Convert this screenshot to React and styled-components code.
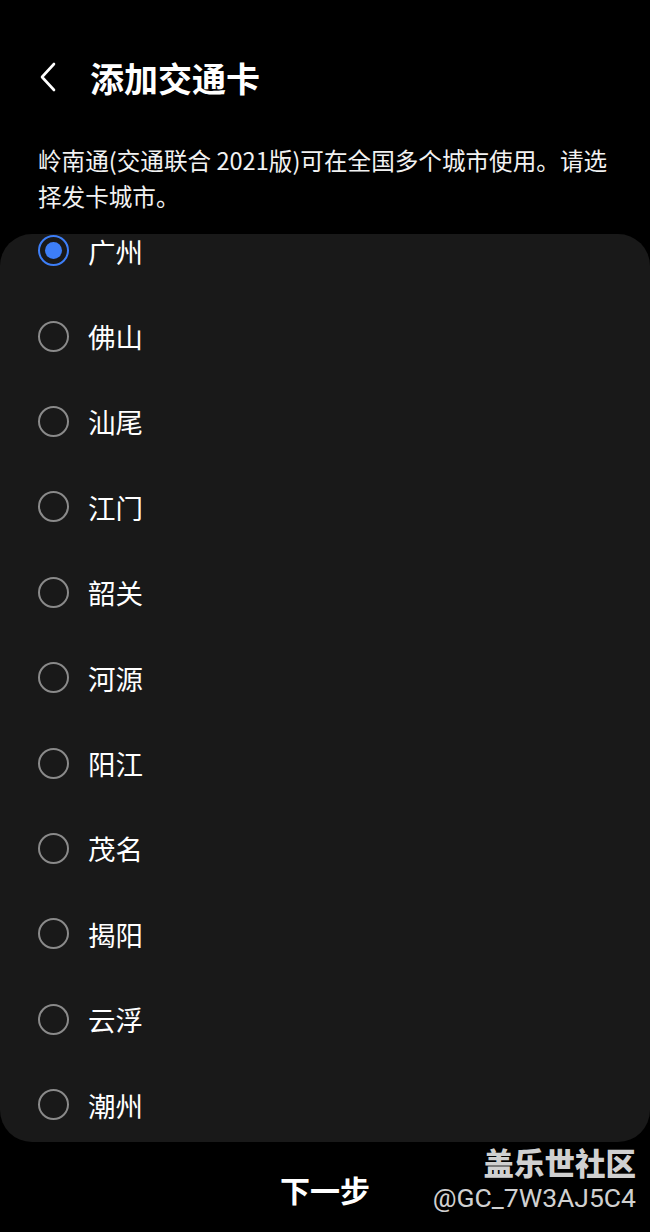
import styled, { createGlobalStyle } from "styled-components";

const GlobalStyle = createGlobalStyle`
  html, body {
    margin: 0;
    padding: 0;
    background: #000;
  }
  body {
    font-family: "Noto Sans CJK SC", "Noto Sans", sans-serif;
    color: #fff;
  }
`;

const cities = [
  "广州",
  "佛山",
  "汕尾",
  "江门",
  "韶关",
  "河源",
  "阳江",
  "茂名",
  "揭阳",
  "云浮",
  "潮州",
];

const Page = styled.div`
  position: relative;
  width: 650px;
  height: 1232px;
  background: #000;
  display: flex;
  flex-direction: column;
  overflow: hidden;
`;

const Header = styled.div`
  display: flex;
  align-items: center;
  padding-left: 38px;
  gap: 30px;
  height: 74px;
  margin-top: 40px;
`;

const Title = styled.h1`
  margin: 0;
  font-size: 34px;
  font-weight: 700;
  color: #fff;
`;

const BackBtn = styled.div`
  width: 22px;
  height: 30px;
  display: flex;
  align-items: center;
`;

const Desc = styled.p`
  margin: 28px 38px 0 38px;
  font-size: 23.6px;
  line-height: 36px;
  color: #f2f2f2;
`;

const Card = styled.div`
  margin-top: 20px;
  height: 908px;
  background: #191919;
  border-radius: 32px;
  overflow: hidden;
`;

const List = styled.div`
  margin-top: -26px;
  display: flex;
  flex-direction: column;
`;

const Row = styled.div`
  height: 85.4px;
  display: flex;
  align-items: center;
  padding-left: 38px;
  gap: 19px;
`;

const Radio = styled.div`
  width: 27px;
  height: 27px;
  border-radius: 50%;
  border: 2.5px solid ${(p) => (p.checked ? "#3d7ef7" : "#8a8a8a")};
  display: flex;
  align-items: center;
  justify-content: center;
  flex-shrink: 0;
  &::after {
    content: "";
    display: ${(p) => (p.checked ? "block" : "none")};
    width: 17px;
    height: 17px;
    border-radius: 50%;
    background: #3d7ef7;
  }
`;

const CityName = styled.span`
  font-size: 27.5px;
  color: #fff;
`;

const Footer = styled.div`
  flex: 1;
  display: flex;
  align-items: center;
  justify-content: center;
`;

const NextBtn = styled.span`
  font-size: 30px;
  font-weight: 700;
  color: #fff;
  margin-top: 4px;
`;

const Watermark = styled.div`
  position: absolute;
  right: 14px;
  bottom: 18px;
  display: flex;
  flex-direction: column;
  align-items: flex-end;
  color: #d0d0d0;
  line-height: 1.2;
`;

const MarkTitle = styled.span`
  font-size: 30.5px;
  font-weight: 900;
  margin-bottom: 2px;
`;

const MarkId = styled.span`
  font-family: "Roboto", "Liberation Sans", sans-serif;
  font-size: 26.5px;
`;

export default function App() {
  return (
    <>
      <GlobalStyle />
      <Page>
        <Header>
          <BackBtn>
            <svg width="22" height="30" viewBox="0 0 22 30">
              <path
                d="M16 2 L4 15 L16 28"
                fill="none"
                stroke="#fff"
                strokeWidth="2.6"
                strokeLinecap="round"
                strokeLinejoin="round"
              />
            </svg>
          </BackBtn>
          <Title>添加交通卡</Title>
        </Header>
        <Desc>
          岭南通(交通联合 2021版)可在全国多个城市使用。请选择发卡城市。
        </Desc>
        <Card>
          <List>
            {cities.map((c, i) => (
              <Row key={c}>
                <Radio checked={i === 0} />
                <CityName>{c}</CityName>
              </Row>
            ))}
          </List>
        </Card>
        <Footer>
          <NextBtn>下一步</NextBtn>
        </Footer>
        <Watermark>
          <MarkTitle>盖乐世社区</MarkTitle>
          <MarkId>@GC_7W3AJ5C4</MarkId>
        </Watermark>
      </Page>
    </>
  );
}
